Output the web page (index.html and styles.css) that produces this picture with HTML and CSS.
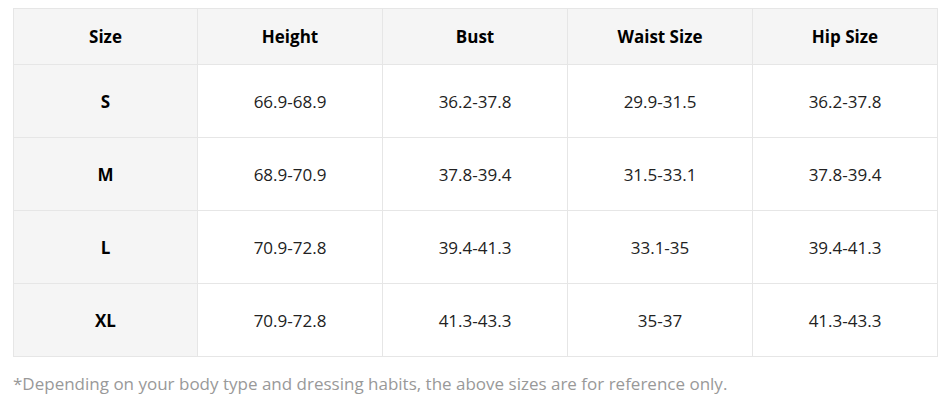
FILE: index.html
```html
<!DOCTYPE html>
<html>
<head>
<meta charset="utf-8">
<link rel="stylesheet" href="styles.css">
</head>
<body>
<div class="wrap">
  <table class="size-table">
    <colgroup>
      <col class="col-first"><col class="col"><col class="col"><col class="col"><col class="col">
    </colgroup>
    <thead>
      <tr><th>Size</th><th>Height</th><th>Bust</th><th>Waist Size</th><th>Hip Size</th></tr>
    </thead>
    <tbody>
      <tr><th>S</th><td>66.9-68.9</td><td>36.2-37.8</td><td>29.9-31.5</td><td>36.2-37.8</td></tr>
      <tr><th>M</th><td>68.9-70.9</td><td>37.8-39.4</td><td>31.5-33.1</td><td>37.8-39.4</td></tr>
      <tr><th>L</th><td>70.9-72.8</td><td>39.4-41.3</td><td>33.1-35</td><td>39.4-41.3</td></tr>
      <tr><th>XL</th><td>70.9-72.8</td><td>41.3-43.3</td><td>35-37</td><td>41.3-43.3</td></tr>
    </tbody>
  </table>
  <p class="note">*Depending on your body type and dressing habits, the above sizes are for reference only.</p>
</div>
</body>
</html>
```
FILE: styles.css
```css
html, body {
  margin: 0;
  padding: 0;
  background: #fff;
}
.wrap {
  padding: 8px 0 0 13px;
  font-family: "Open Sans", "Noto Sans", sans-serif;
}
.size-table {
  width: 924px;
  border-collapse: collapse;
  table-layout: fixed;
  color: #222;
}
.col-first {
  width: 184px;
}
.col {
  width: 185px;
}
.size-table th,
.size-table td {
  border: 1px solid #e6e6e6;
  text-align: center;
  font-size: 17px;
  padding: 0;
}
.size-table thead th {
  height: 55px;
  background: #f5f5f5;
  font-weight: 700;
  color: #000;
}
.size-table tbody th {
  background: #f5f5f5;
  font-weight: 700;
  color: #000;
}
.size-table tbody td,
.size-table tbody th {
  height: 72px;
}
.note {
  margin: 15px 0 0;
  font-size: 17px;
  color: #999;
}
```
